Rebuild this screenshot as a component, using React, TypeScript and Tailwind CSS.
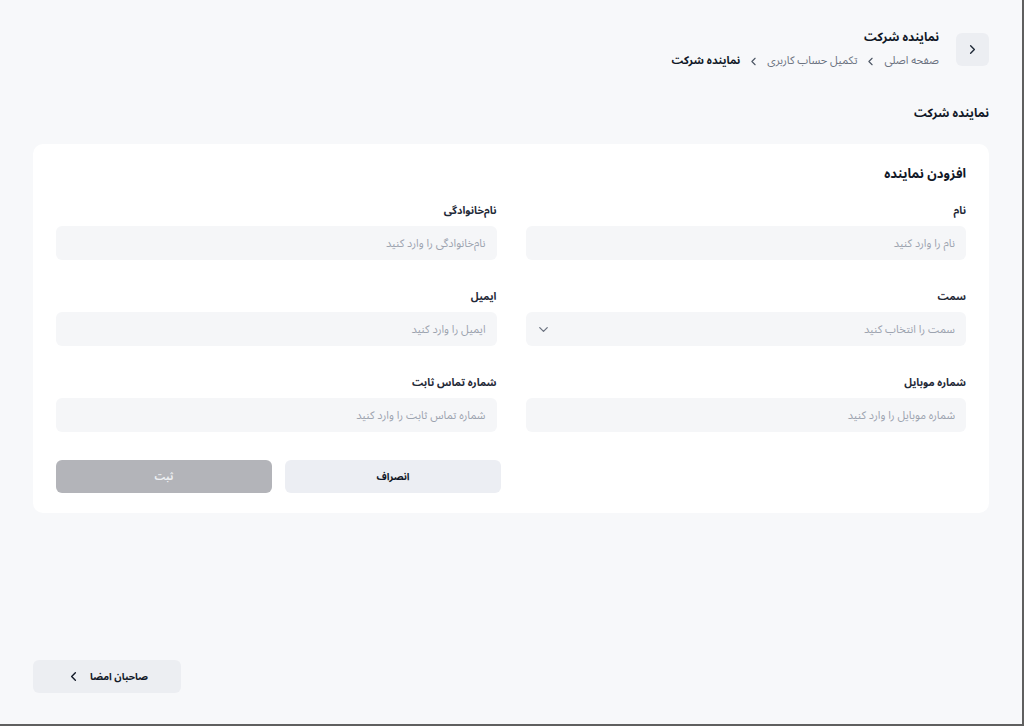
import React from "react";
import { ChevronDown, ChevronLeft, ChevronRight } from "lucide-react";

const font = { fontFamily: '"Noto Sans Arabic", "DejaVu Sans", "Noto Sans", sans-serif' };

function Field({ label, placeholder, select }: { label: string; placeholder: string; select?: boolean }) {
  return (
    <div className="flex flex-col gap-[7px]">
      <label className="text-[10.5px] leading-[16px] font-bold text-[#1f2937]">{label}</label>
      <div className="relative h-[34px] rounded-[6px] bg-[#f5f6f8] flex items-center">
        <input
          className="w-full h-full bg-transparent px-[11px] text-[11px] text-[#374151] placeholder:text-[#9ca3af] outline-none"
          placeholder={placeholder}
          readOnly={select}
          style={font}
        />
        {select && (
          <ChevronDown className="absolute left-[10px] w-[15px] h-[15px] text-[#6b7280]" strokeWidth={2} />
        )}
      </div>
    </div>
  );
}

export default function App() {
  return (
    <div
      dir="rtl"
      style={font}
      className="w-[1024px] h-[726px] box-border border-r-2 border-b-2 border-[#5f5f5f] bg-[#f7f8fa] flex flex-col px-[33px] pt-[33px] pb-[31px]"
    >
      {/* Header */}
      <div className="h-[33px] flex items-start gap-[17px]">
        <button className="w-[33px] h-[33px] shrink-0 rounded-[6px] bg-[#eceef2] flex items-center justify-center text-[#1f2937]">
          <ChevronRight className="w-[15px] h-[15px]" strokeWidth={2.2} />
        </button>
        <div className="flex flex-col gap-[6px] -mt-[4px]">
          <h1 className="text-[12px] leading-[18px] font-bold text-[#111827]">نماینده شرکت</h1>
          <div className="flex items-center gap-[7px] text-[11px] leading-[16px] text-[#6b7280]">
            <span>صفحه اصلی</span>
            <ChevronLeft className="w-[13px] h-[13px] text-[#4b5563]" strokeWidth={2} />
            <span>تکمیل حساب کاربری</span>
            <ChevronLeft className="w-[13px] h-[13px] text-[#4b5563]" strokeWidth={2} />
            <span className="font-bold text-[#111827]">نماینده شرکت</span>
          </div>
        </div>
      </div>

      <h2 className="mt-[38px] text-[12px] leading-[20px] font-bold text-[#111827]">نماینده شرکت</h2>

      {/* Card */}
      <div className="mt-[20px] bg-white rounded-[10px] pt-[20px] pb-[20px] px-[23px]">
        <h3 className="text-[13px] leading-[20px] font-bold text-[#111827]">افزودن نماینده</h3>
        <div className="mt-[19px] grid grid-cols-2 gap-x-[29px] gap-y-[29px]">
          <Field label="نام" placeholder="نام را وارد کنید" />
          <Field label="نام‌خانوادگی" placeholder="نام‌خانوادگی را وارد کنید" />
          <Field label="سمت" placeholder="سمت را انتخاب کنید" select />
          <Field label="ایمیل" placeholder="ایمیل را وارد کنید" />
          <Field label="شماره موبایل" placeholder="شماره موبایل را وارد کنید" />
          <Field label="شماره تماس ثابت" placeholder="شماره تماس ثابت را وارد کنید" />
        </div>
        <div className="mt-[28px] flex justify-end gap-[13px]">
          <button className="w-[216px] h-[33px] rounded-[6px] bg-[#eceef3] text-[10px] font-bold text-[#111827]">
            انصراف
          </button>
          <button className="w-[216px] h-[33px] rounded-[6px] bg-[#b3b4b9] text-[10px] font-bold text-[#eef0f3]">
            ثبت
          </button>
        </div>
      </div>

      {/* Footer nav */}
      <div className="mt-auto flex justify-end">
        <button className="w-[148px] h-[33px] rounded-[6px] bg-[#eceef2] flex items-center justify-center gap-[9px] text-[10px] font-bold text-[#111827]">
          <span>صاحبان امضا</span>
          <ChevronLeft className="w-[15px] h-[15px]" strokeWidth={2.2} />
        </button>
      </div>
    </div>
  );
}
